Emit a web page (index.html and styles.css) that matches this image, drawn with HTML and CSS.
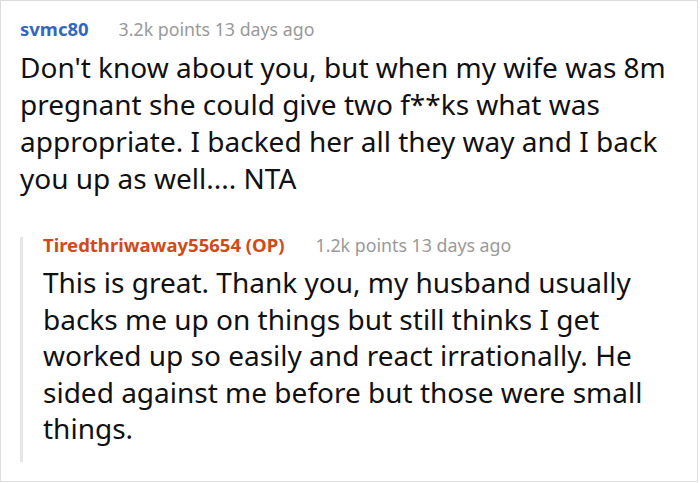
FILE: index.html
```html
<!DOCTYPE html>
<html>
<head>
<meta charset="utf-8">
<link rel="stylesheet" href="styles.css">
</head>
<body>
<div class="card">
  <div class="comment">
    <div class="head"><span class="user">svmc80</span><span class="meta">3.2k points 13 days ago</span></div>
    <p class="text">Don't know about you, but when my wife was 8m pregnant she could give two f**ks what was appropriate. I backed her all they way and I back you up as well.... NTA</p>
    <div class="reply">
      <div class="head"><span class="user op">Tiredthriwaway55654 (OP)</span><span class="meta">1.2k points 13 days ago</span></div>
      <p class="text">This is great. Thank you, my husband usually backs me up on things but still thinks I get worked up so easily and react irrationally. He sided against me before but those were small things.</p>
    </div>
  </div>
</div>
</body>
</html>
```
FILE: styles.css
```css
html, body {
  margin: 0;
  padding: 0;
  background: #fff;
}
.card {
  box-sizing: border-box;
  width: 698px;
  height: 482px;
  border: 1px solid #dcdcdc;
  padding: 14px 20px 0 19px;
  font-family: "Noto Sans", "Open Sans", sans-serif;
  color: #111;
}
.head {
  display: flex;
  align-items: baseline;
  line-height: 28px;
}
.user {
  font-weight: 700;
  font-size: 18.5px;
  color: #3567c1;
  margin-right: 30px;
}
.user.op {
  color: #d14a18;
  margin-right: 31px;
}
.meta {
  font-size: 17.8px;
  color: #999;
}
.text {
  margin: 6px 0 0;
  font-size: 28px;
  line-height: 37px;
}
.reply {
  margin-top: 40px;
  border-left: 3px solid #e6e6e6;
  padding-left: 20px;
  padding-bottom: 15px;
}
.reply .head {
  line-height: 16px;
}
.reply .text {
  margin-top: 11px;
  line-height: 36.5px;
}
```
